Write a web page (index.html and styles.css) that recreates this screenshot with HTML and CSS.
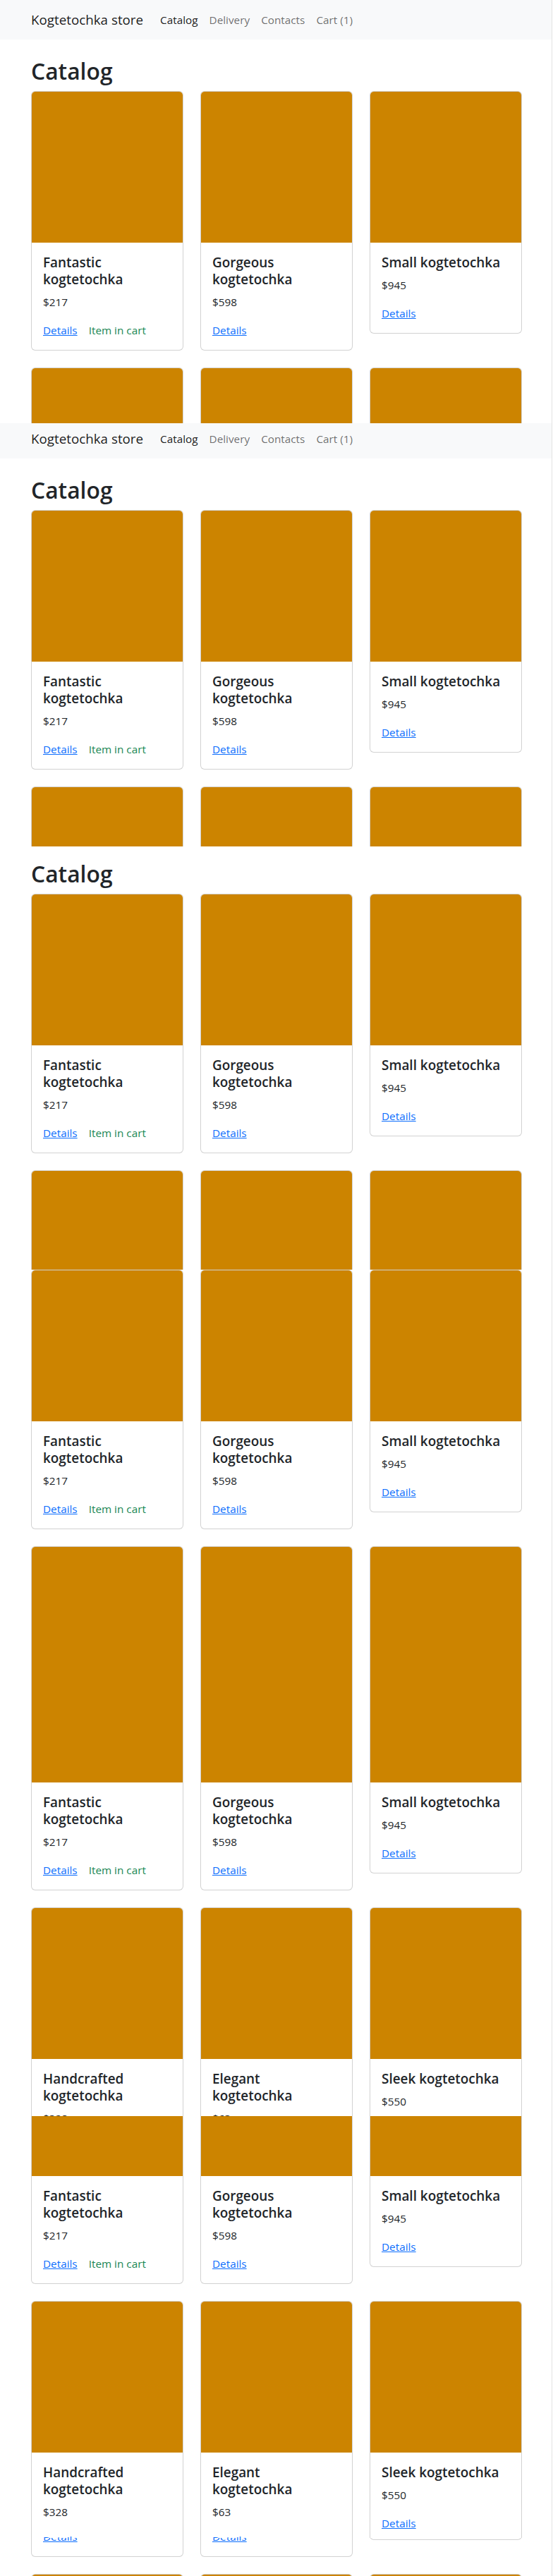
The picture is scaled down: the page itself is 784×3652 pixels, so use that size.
FILE: index.html
```html
<!DOCTYPE html>
<html lang="en">
<head>
<meta charset="utf-8">
<title>Kogtetochka store</title>
<link rel="stylesheet" href="styles.css">
</head>
<body>
<div class="screen">

  <!-- slice 1 -->
  <div class="slice h600">
    <div class="page">
      <nav class="navbar">
        <div class="container nav-inner">
          <a class="brand" href="#">Kogtetochka store</a>
          <div class="nav">
            <a class="nav-link active" href="#">Catalog</a>
            <a class="nav-link" href="#">Delivery</a>
            <a class="nav-link" href="#">Contacts</a>
            <a class="nav-link" href="#">Cart (1)</a>
          </div>
        </div>
      </nav>
      <main class="container main">
        <h1 class="title-main">Catalog</h1>
        <div class="cards">
          <div class="card"><div class="img"></div><div class="body"><h5 class="card-title">Fantastic kogtetochka</h5><p class="price">$217</p><div class="links"><a href="#">Details</a><span class="incart">Item in cart</span></div></div></div>
          <div class="card"><div class="img"></div><div class="body"><h5 class="card-title">Gorgeous kogtetochka</h5><p class="price">$598</p><div class="links"><a href="#">Details</a></div></div></div>
          <div class="card"><div class="img"></div><div class="body"><h5 class="card-title">Small kogtetochka</h5><p class="price">$945</p><div class="links"><a href="#">Details</a></div></div></div>
          <div class="card"><div class="img"></div><div class="body"><h5 class="card-title">Handcrafted kogtetochka</h5><p class="price">$328</p><div class="links"><a href="#">Details</a></div></div></div>
          <div class="card"><div class="img"></div><div class="body"><h5 class="card-title">Elegant kogtetochka</h5><p class="price">$63</p><div class="links"><a href="#">Details</a></div></div></div>
          <div class="card"><div class="img"></div><div class="body"><h5 class="card-title">Sleek kogtetochka</h5><p class="price">$550</p><div class="links"><a href="#">Details</a></div></div></div>
        </div>
      </main>
    </div>
  </div>

  <!-- slice 2 -->
  <div class="slice h600">
    <div class="page off6">
      <nav class="navbar">
        <div class="container nav-inner">
          <a class="brand" href="#">Kogtetochka store</a>
          <div class="nav">
            <a class="nav-link active" href="#">Catalog</a>
            <a class="nav-link" href="#">Delivery</a>
            <a class="nav-link" href="#">Contacts</a>
            <a class="nav-link" href="#">Cart (1)</a>
          </div>
        </div>
      </nav>
      <main class="container main">
        <h1 class="title-main">Catalog</h1>
        <div class="cards">
          <div class="card"><div class="img"></div><div class="body"><h5 class="card-title">Fantastic kogtetochka</h5><p class="price">$217</p><div class="links"><a href="#">Details</a><span class="incart">Item in cart</span></div></div></div>
          <div class="card"><div class="img"></div><div class="body"><h5 class="card-title">Gorgeous kogtetochka</h5><p class="price">$598</p><div class="links"><a href="#">Details</a></div></div></div>
          <div class="card"><div class="img"></div><div class="body"><h5 class="card-title">Small kogtetochka</h5><p class="price">$945</p><div class="links"><a href="#">Details</a></div></div></div>
          <div class="card"><div class="img"></div><div class="body"><h5 class="card-title">Handcrafted kogtetochka</h5><p class="price">$328</p><div class="links"><a href="#">Details</a></div></div></div>
          <div class="card"><div class="img"></div><div class="body"><h5 class="card-title">Elegant kogtetochka</h5><p class="price">$63</p><div class="links"><a href="#">Details</a></div></div></div>
          <div class="card"><div class="img"></div><div class="body"><h5 class="card-title">Sleek kogtetochka</h5><p class="price">$550</p><div class="links"><a href="#">Details</a></div></div></div>
        </div>
      </main>
    </div>
  </div>

  <!-- slice 3 -->
  <div class="slice h600">
    <div class="page off62">
      <nav class="navbar">
        <div class="container nav-inner">
          <a class="brand" href="#">Kogtetochka store</a>
          <div class="nav">
            <a class="nav-link active" href="#">Catalog</a>
            <a class="nav-link" href="#">Delivery</a>
            <a class="nav-link" href="#">Contacts</a>
            <a class="nav-link" href="#">Cart (1)</a>
          </div>
        </div>
      </nav>
      <main class="container main">
        <h1 class="title-main">Catalog</h1>
        <div class="cards">
          <div class="card"><div class="img"></div><div class="body"><h5 class="card-title">Fantastic kogtetochka</h5><p class="price">$217</p><div class="links"><a href="#">Details</a><span class="incart">Item in cart</span></div></div></div>
          <div class="card"><div class="img"></div><div class="body"><h5 class="card-title">Gorgeous kogtetochka</h5><p class="price">$598</p><div class="links"><a href="#">Details</a></div></div></div>
          <div class="card"><div class="img"></div><div class="body"><h5 class="card-title">Small kogtetochka</h5><p class="price">$945</p><div class="links"><a href="#">Details</a></div></div></div>
          <div class="card"><div class="img"></div><div class="body"><h5 class="card-title">Handcrafted kogtetochka</h5><p class="price">$328</p><div class="links"><a href="#">Details</a></div></div></div>
          <div class="card"><div class="img"></div><div class="body"><h5 class="card-title">Elegant kogtetochka</h5><p class="price">$63</p><div class="links"><a href="#">Details</a></div></div></div>
          <div class="card"><div class="img"></div><div class="body"><h5 class="card-title">Sleek kogtetochka</h5><p class="price">$550</p><div class="links"><a href="#">Details</a></div></div></div>
        </div>
      </main>
    </div>
  </div>

  <!-- slice 4 -->
  <div class="slice h1200">
    <div class="container">
      <div class="cards">
        <div class="card"><div class="img"></div><div class="body"><h5 class="card-title">Fantastic kogtetochka</h5><p class="price">$217</p><div class="links"><a href="#">Details</a><span class="incart">Item in cart</span></div></div></div>
        <div class="card"><div class="img"></div><div class="body"><h5 class="card-title">Gorgeous kogtetochka</h5><p class="price">$598</p><div class="links"><a href="#">Details</a></div></div></div>
        <div class="card"><div class="img"></div><div class="body"><h5 class="card-title">Small kogtetochka</h5><p class="price">$945</p><div class="links"><a href="#">Details</a></div></div></div>
        <div class="card"><div class="img tall"></div><div class="body"><h5 class="card-title">Fantastic kogtetochka</h5><p class="price">$217</p><div class="links"><a href="#">Details</a><span class="incart">Item in cart</span></div></div></div>
        <div class="card"><div class="img tall"></div><div class="body"><h5 class="card-title">Gorgeous kogtetochka</h5><p class="price">$598</p><div class="links"><a href="#">Details</a></div></div></div>
        <div class="card"><div class="img tall"></div><div class="body"><h5 class="card-title">Small kogtetochka</h5><p class="price">$945</p><div class="links"><a href="#">Details</a></div></div></div>
        <div class="card"><div class="img"></div><div class="body"><h5 class="card-title">Handcrafted kogtetochka</h5><p class="price">$328</p><div class="links"><a href="#">Details</a></div></div></div>
        <div class="card"><div class="img"></div><div class="body"><h5 class="card-title">Elegant kogtetochka</h5><p class="price">$63</p><div class="links"><a href="#">Details</a></div></div></div>
        <div class="card"><div class="img"></div><div class="body"><h5 class="card-title">Sleek kogtetochka</h5><p class="price">$550</p><div class="links"><a href="#">Details</a></div></div></div>
      </div>
    </div>
  </div>

  <!-- slice 5 -->
  <div class="slice h598">
    <div class="container off130">
      <div class="cards">
        <div class="card"><div class="img"></div><div class="body"><h5 class="card-title">Fantastic kogtetochka</h5><p class="price">$217</p><div class="links"><a href="#">Details</a><span class="incart">Item in cart</span></div></div></div>
        <div class="card"><div class="img"></div><div class="body"><h5 class="card-title">Gorgeous kogtetochka</h5><p class="price">$598</p><div class="links"><a href="#">Details</a></div></div></div>
        <div class="card"><div class="img"></div><div class="body"><h5 class="card-title">Small kogtetochka</h5><p class="price">$945</p><div class="links"><a href="#">Details</a></div></div></div>
        <div class="card"><div class="img"></div><div class="body"><h5 class="card-title">Handcrafted kogtetochka</h5><p class="price">$328</p><div class="links"><a href="#">Details</a></div></div></div>
        <div class="card"><div class="img"></div><div class="body"><h5 class="card-title">Elegant kogtetochka</h5><p class="price">$63</p><div class="links"><a href="#">Details</a></div></div></div>
        <div class="card"><div class="img"></div><div class="body"><h5 class="card-title">Sleek kogtetochka</h5><p class="price">$550</p><div class="links"><a href="#">Details</a></div></div></div>
      </div>
    </div>
  </div>

  <!-- slice 6 -->
  <div class="slice h54">
    <div class="container off733">
      <div class="cards">
        <div class="card"><div class="img"></div><div class="body"><h5 class="card-title">Fantastic kogtetochka</h5><p class="price">$217</p><div class="links"><a href="#">Details</a><span class="incart">Item in cart</span></div></div></div>
        <div class="card"><div class="img"></div><div class="body"><h5 class="card-title">Gorgeous kogtetochka</h5><p class="price">$598</p><div class="links"><a href="#">Details</a></div></div></div>
        <div class="card"><div class="img"></div><div class="body"><h5 class="card-title">Small kogtetochka</h5><p class="price">$945</p><div class="links"><a href="#">Details</a></div></div></div>
        <div class="card"><div class="img"></div><div class="body"><h5 class="card-title">Handcrafted kogtetochka</h5><p class="price">$328</p><div class="links"><a href="#">Details</a></div></div></div>
        <div class="card"><div class="img"></div><div class="body"><h5 class="card-title">Elegant kogtetochka</h5><p class="price">$63</p><div class="links"><a href="#">Details</a></div></div></div>
        <div class="card"><div class="img"></div><div class="body"><h5 class="card-title">Sleek kogtetochka</h5><p class="price">$550</p><div class="links"><a href="#">Details</a></div></div></div>
        <div class="card"><div class="img"></div><div class="body"><h5 class="card-title">Fantastic kogtetochka</h5><p class="price">$217</p></div></div>
        <div class="card"><div class="img"></div><div class="body"><h5 class="card-title">Gorgeous kogtetochka</h5><p class="price">$598</p></div></div>
        <div class="card"><div class="img"></div><div class="body"><h5 class="card-title">Small kogtetochka</h5><p class="price">$945</p></div></div>
      </div>
    </div>
  </div>

</div>
</body>
</html>
```

FILE: styles.css
```css
* { box-sizing: border-box; }

html, body {
  margin: 0;
  padding: 0;
  background: #fff;
}

body {
  font-family: "Open Sans", "Noto Sans", sans-serif;
  font-size: 15.3px;
  line-height: 24px;
  color: #212529;
}

.screen {
  width: 783px;
  border-right: 1px solid #e3e3e3;
}

.slice {
  overflow: hidden;
}
.h600 { height: 600px; }
.h1200 { height: 1200px; }
.h598 { height: 598px; }
.h54 { height: 54px; }

.off6 { margin-top: -6px; }
.off62 { margin-top: -62px; }
.off130 { margin-top: -130px; }
.off733 { margin-top: -733px; }

.container {
  width: 720px;
  margin-left: 32px;
  padding: 0 12px;
}

/* navbar */
.navbar {
  background: #f8f9fa;
  padding: 8px 0;
  height: 56px;
}
.nav-inner {
  display: flex;
  align-items: center;
}
.brand {
  font-size: 18.8px;
  line-height: 30px;
  padding: 5px 0;
  margin-right: 16px;
  color: rgba(0, 0, 0, 0.9);
  text-decoration: none;
  white-space: nowrap;
}
.nav {
  display: flex;
}
.nav-link {
  padding: 8px;
  line-height: 24px;
  color: rgba(0, 0, 0, 0.58);
  text-decoration: none;
  white-space: nowrap;
}
.nav-link.active {
  color: rgba(0, 0, 0, 0.9);
}

/* main */
.main {
  padding-top: 24px;
}
.title-main {
  margin: 0 0 8px;
  font-size: 31.8px;
  line-height: 41px;
  font-weight: 600;
}

.cards {
  display: grid;
  grid-template-columns: repeat(3, 216px);
  column-gap: 24px;
  row-gap: 24px;
  align-items: start;
}

.card {
  background: #fff;
  border: 1px solid rgba(0, 0, 0, 0.175);
  border-radius: 6px;
}
.img {
  height: 214px;
  background: #cc8400;
  border-radius: 5px 5px 0 0;
}
.img.tall {
  height: 334px;
}
.body {
  padding: 16px;
}
.card-title {
  margin: 0 0 8px;
  font-size: 18.9px;
  line-height: 24px;
  font-weight: 600;
}
.price {
  margin: 0 0 16px;
}
.links {
  display: flex;
  gap: 16px;
  white-space: nowrap;
}
.links a {
  color: #0d6efd;
  text-decoration: underline;
}
.incart {
  color: #198754;
}
```
